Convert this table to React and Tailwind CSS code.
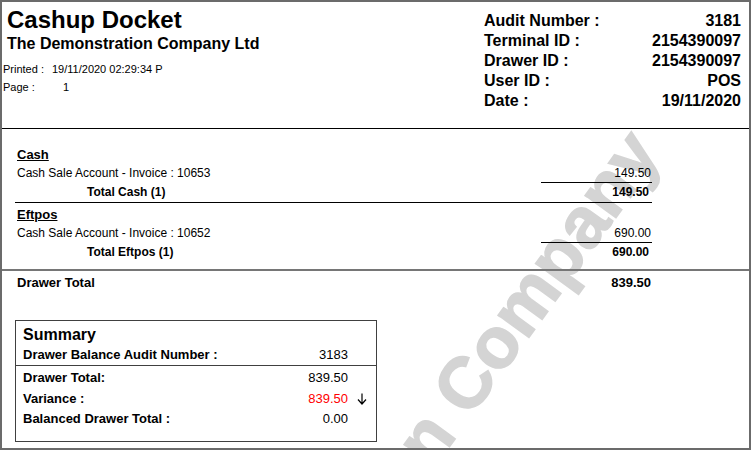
import React from "react";

const headerRows = [
  ["Audit Number :", "3181"],
  ["Terminal ID :", "2154390097"],
  ["Drawer ID :", "2154390097"],
  ["User ID :", "POS"],
  ["Date :", "19/11/2020"],
];

const DownArrow = () => (
  <svg width="10" height="12" viewBox="0 0 10 12" className="inline-block">
    <path d="M5 0.5V11M1 6.5L5 11L9 6.5" fill="none" stroke="#000" strokeWidth="1.2" />
  </svg>
);

const Section = ({ title, line, amount, total, first }) => (
  <div className={first ? "" : "mt-[3px]"}>
    <div className="pl-[2px] text-[13px] leading-[18px] font-bold underline">{title}</div>
    <div className="flex text-[12px] leading-[18px]">
      <div className="flex-1 pl-[2px]">{line}</div>
      <div className="w-[111px] border-b border-black pr-[1px] text-right">{amount}</div>
    </div>
    <div className={`flex text-[12px] leading-[19px] font-bold ${first ? "border-b border-black" : ""}`}>
      <div className="flex-1 pl-[72px]">{total}</div>
      <div className="w-[111px] pr-[3px] text-right">{amount}</div>
    </div>
  </div>
);

const App = () => {
  return (
    <div className="relative h-[450px] w-[751px] overflow-hidden border-2 border-[#6b6b6b] bg-white font-['Liberation_Sans',Arial,sans-serif] text-black">
      {/* Watermark */}
      <div className="absolute left-[640px] top-[137px] h-0 w-0">
        <span className="absolute right-0 top-[-36px] origin-right rotate-[-54deg] whitespace-nowrap text-[72px] leading-[72px] font-bold text-[#d4d4d4] [-webkit-text-stroke:1.5px_#d4d4d4] select-none">
          The Demonstration Company
        </span>
      </div>

      <div className="relative">
        {/* Header */}
        <div className="flex h-[127px] justify-between border-b border-black">
          <div className="pl-[1px] pt-[4px]">
            <h1 className="pl-[4px] text-[24px] leading-[28px] font-bold">Cashup Docket</h1>
            <p className="pl-[4px] text-[16px] leading-[20px] font-bold">
              The Demonstration Company Ltd
            </p>
            <div className="mt-[6px] text-[11px] leading-[18px]">
              <div className="flex">
                <span className="w-[49px]">Printed :</span>
                <span>19/11/2020 02:29:34 P</span>
              </div>
              <div className="flex">
                <span className="w-[49px]">Page :</span>
                <span className="pl-[11px]">1</span>
              </div>
            </div>
          </div>

          <div className="mr-[8px] w-[257px] pt-[9px]">
            {headerRows.map(([label, value]) => (
              <div key={label} className="flex justify-between text-[16px] leading-[20px] font-bold">
                <span>{label}</span>
                <span>{value}</span>
              </div>
            ))}
          </div>
        </div>

        {/* Tenders */}
        <div className="ml-[13px] w-[637px] pt-[17px]">
          <Section
            first
            title="Cash"
            line="Cash Sale Account - Invoice : 10653"
            amount="149.50"
            total="Total Cash (1)"
          />
          <Section
            title="Eftpos"
            line="Cash Sale Account - Invoice : 10652"
            amount="690.00"
            total="Total Eftpos (1)"
          />
        </div>

        <div className="mt-[7px] h-[2px] bg-[#767676]" />

        <div className="ml-[13px] mt-[3px] flex w-[637px] text-[13px] leading-[18px] font-bold">
          <div className="flex-1 pl-[2px]">Drawer Total</div>
          <div className="w-[111px] pr-[1px] text-right">839.50</div>
        </div>

        {/* Summary */}
        <div className="ml-[13px] mt-[28px] w-[362px] border border-[#404040]">
          <div className="pl-[7px] pt-[3px] text-[16px] leading-[21px] font-bold">Summary</div>
          <div className="flex border-b border-[#404040] text-[13px] leading-[20px]">
            <span className="flex-1 pl-[7px] font-bold">Drawer Balance Audit Number :</span>
            <span className="text-right">3183</span>
            <span className="w-[28px]" />
          </div>
          <div className="pb-[11px] pt-[2px] text-[13px] leading-[20.5px]">
            <div className="flex">
              <span className="flex-1 pl-[7px] font-bold">Drawer Total:</span>
              <span className="text-right">839.50</span>
              <span className="w-[28px]" />
            </div>
            <div className="flex">
              <span className="flex-1 pl-[7px] font-bold">Variance :</span>
              <span className="text-right text-[#ff0000]">839.50</span>
              <span className="flex w-[28px] items-center pl-[9px]">
                <DownArrow />
              </span>
            </div>
            <div className="flex">
              <span className="flex-1 pl-[7px] font-bold">Balanced Drawer Total :</span>
              <span className="text-right">0.00</span>
              <span className="w-[28px]" />
            </div>
          </div>
        </div>
      </div>
    </div>
  );
};

export default App;
